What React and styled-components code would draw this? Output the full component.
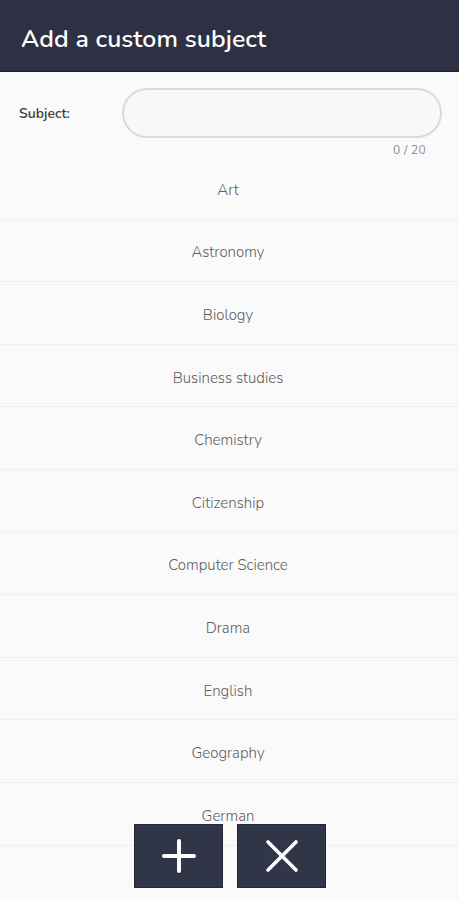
import React from "react";
import styled, { createGlobalStyle } from "styled-components";

const Global = createGlobalStyle`
  html, body { margin: 0; padding: 0; background: #fafafa; }
  body { font-family: "Nunito", Lato, "Noto Sans", sans-serif; }
  * { box-sizing: border-box; }
`;

const Page = styled.div`
  position: relative;
  width: 459px;
  height: 900px;
  overflow: hidden;
  background: #fafafa;
  display: flex;
  flex-direction: column;
`;

const Header = styled.header`
  height: 72px;
  flex: none;
  background: #2e3043;
  display: flex;
  align-items: center;
  padding: 0 0 0 21px;
  border-bottom: 1px solid #1e2030;
`;

const Title = styled.h1`
  margin: 0;
  color: #ffffff;
  font-size: 24.8px;
  font-weight: 600;
  letter-spacing: 0.1px;
  position: relative;
  top: 3px;
`;

const Form = styled.div`
  padding: 16px 17px 0 19px;
  flex: none;
`;

const FieldRow = styled.div`
  display: flex;
  align-items: center;
`;

const Label = styled.label`
  width: 103px;
  font-size: 14px;
  font-weight: 600;
  color: #3a3a3a;
`;

const Input = styled.div`
  flex: 1;
  height: 50px;
  border-radius: 25px;
  border: 2px solid #dadada;
  background: #f8f8f8;
`;

const Counter = styled.div`
  text-align: right;
  padding-right: 16px;
  margin-top: 5px;
  height: 14px;
  line-height: 14px;
  font-size: 12px;
  color: #8a8a8a;
  letter-spacing: 0.3px;
`;

const List = styled.ul`
  list-style: none;
  margin: 0;
  padding: 0;
`;

const Item = styled.li`
  height: 62.6px;
  display: flex;
  align-items: center;
  justify-content: center;
  border-bottom: 1px solid #efefef;
  font-size: 15px;
  font-weight: 300;
  color: #5e5e5e;
  padding-top: 4px;
  padding-right: 3px;
`;

const Actions = styled.div`
  position: absolute;
  left: 0;
  right: 0;
  bottom: 12px;
  display: flex;
  justify-content: center;
  gap: 14px;
  padding-left: 1px;
`;

const ActionButton = styled.button`
  width: 89px;
  height: 64px;
  background: #303548;
  border: 1px solid #23263a;
  border-radius: 0;
  padding: 0;
  display: flex;
  align-items: center;
  justify-content: center;
  cursor: pointer;
`;

const subjects = [
  "Art",
  "Astronomy",
  "Biology",
  "Business studies",
  "Chemistry",
  "Citizenship",
  "Computer Science",
  "Drama",
  "English",
  "Geography",
  "German",
];

const PlusIcon = () => (
  <svg width="34" height="34" viewBox="0 0 34 34">
    <path d="M17 2 V32 M2 17 H32" stroke="#fff" strokeWidth="4" strokeLinecap="round" />
  </svg>
);

const CrossIcon = () => (
  <svg width="34" height="34" viewBox="0 0 34 34">
    <path d="M3 3 L31 31 M31 3 L3 31" stroke="#fff" strokeWidth="3.6" strokeLinecap="round" />
  </svg>
);

export default function App() {
  return (
    <>
      <Global />
      <Page>
        <Header>
          <Title>Add a custom subject</Title>
        </Header>
        <Form>
          <FieldRow>
            <Label>Subject:</Label>
            <Input />
          </FieldRow>
          <Counter>0 / 20</Counter>
        </Form>
        <List>
          {subjects.map((s) => (
            <Item key={s}>{s}</Item>
          ))}
        </List>
        <Actions>
          <ActionButton aria-label="Add">
            <PlusIcon />
          </ActionButton>
          <ActionButton aria-label="Cancel">
            <CrossIcon />
          </ActionButton>
        </Actions>
      </Page>
    </>
  );
}
